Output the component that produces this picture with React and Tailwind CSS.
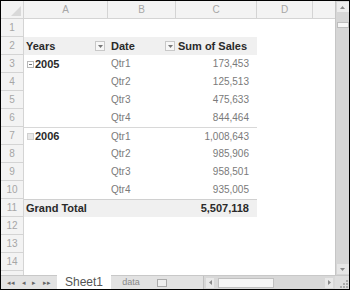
import React from "react";

const rows = [
  { a: "", b: "", c: "" },
  { hdr: true },
  { a: "2005", b: "Qtr1", c: "173,453", group: true },
  { b: "Qtr2", c: "125,513" },
  { b: "Qtr3", c: "475,633" },
  { b: "Qtr4", c: "844,464" },
  { a: "2006", b: "Qtr1", c: "1,008,643", group: true, top: true },
  { b: "Qtr2", c: "985,906" },
  { b: "Qtr3", c: "958,501" },
  { b: "Qtr4", c: "935,005" },
  { total: true },
  {},
  {},
  {},
];

function Drop() {
  return (
    <span className="w-[10px] h-[10px] border border-[#c8c8c8] bg-[#f7f7f7] flex items-center justify-center">
      <svg width="5" height="3" viewBox="0 0 5 3"><path d="M0 0h5L2.5 3z" fill="#777" /></svg>
    </span>
  );
}

function MinusBox({ light }) {
  return (
    <span className={`w-[7px] h-[7px] border ${light ? "border-[#d0d0d0] bg-[#e8e8e8]" : "border-[#b8b8b8] bg-white"} flex items-center justify-center mr-[1px]`}>
      {!light && <span className="w-[3px] h-[1px] bg-[#777]" />}
    </span>
  );
}

export default function App() {
  const cols = "grid-cols-[23px_84px_68px_81px_56px_1fr]";
  return (
    <div className="w-[350px] h-[290px] border border-black bg-white flex flex-col overflow-hidden text-[10px] leading-none" style={{ fontFamily: '"Liberation Sans", Arial, sans-serif' }}>
      <div className="flex flex-1 min-h-0">
        <div className="flex-1 flex flex-col min-w-0">
          {/* column headers */}
          <div className={`grid ${cols} h-[18px] bg-[#f3f3f3] border-b border-[#d4d4d4] text-[#a6a6a6] shrink-0`}>
            <div className="border-r border-[#d4d4d4] relative">
              <svg className="absolute right-[2px] bottom-[2px]" width="10" height="10" viewBox="0 0 10 10"><path d="M10 0V10H0z" fill="#d9d9d9" /></svg>
            </div>
            <div className="border-r border-[#d4d4d4] flex items-center justify-center">A</div>
            <div className="border-r border-[#d4d4d4] flex items-center justify-center">B</div>
            <div className="border-r border-[#d4d4d4] flex items-center justify-center">C</div>
            <div className="border-r border-[#d4d4d4] flex items-center justify-center">D</div>
            <div></div>
          </div>
          {rows.map((r, i) => (
            <div key={i} className={`grid ${cols} h-[18px] shrink-0`}>
              <div className="bg-[#f3f3f3] border-r border-b border-[#d4d4d4] flex items-center justify-center text-[#a6a6a6]">{i + 1}</div>
              {r.hdr ? (
                <>
                  <div className="bg-[#f0f0f0] flex items-center justify-between pl-[2px] pr-[3px] text-[#2a2a2a] font-bold text-[11px]">
                    <span>Years</span><Drop />
                  </div>
                  <div className="bg-[#f0f0f0] flex items-center justify-between pl-[3px] pr-[1px] text-[#2a2a2a] font-bold text-[11px]">
                    <span>Date</span><Drop />
                  </div>
                  <div className="bg-[#f0f0f0] flex items-center pl-[2px] text-[#2a2a2a] font-bold text-[11px] whitespace-nowrap">Sum of Sales</div>
                </>
              ) : r.total ? (
                <>
                  <div className="bg-[#f0f0f0] border-t border-[#d0d0d0] flex items-center pl-[2px] text-[#2a2a2a] font-bold text-[11px] whitespace-nowrap">Grand Total</div>
                  <div className="bg-[#f0f0f0] border-t border-[#d0d0d0]"></div>
                  <div className="bg-[#f0f0f0] border-t border-[#d0d0d0] flex items-center justify-end pr-[8px] text-[#2a2a2a] font-bold text-[11px]">5,507,118</div>
                </>
              ) : (
                <>
                  <div className={`flex items-center pl-[3px] text-[#2a2a2a] font-bold text-[11px] ${r.top ? "border-t border-[#d8d8d8]" : ""}`}>
                    {r.group && <MinusBox light={r.top} />}
                    {r.a}
                  </div>
                  <div className={`flex items-center pl-[3px] text-[#7a7a7a] ${r.top ? "border-t border-[#d8d8d8]" : ""}`}>{r.b}</div>
                  <div className={`flex items-center justify-end pr-[8px] text-[#7a7a7a] ${r.top ? "border-t border-[#d8d8d8]" : ""}`}>{r.c}</div>
                </>
              )}
              <div></div>
              <div></div>
            </div>
          ))}
          <div className={`grid ${cols} flex-1`}>
            <div className="bg-[#f3f3f3] border-r border-[#d4d4d4]"></div>
          </div>
        </div>
        {/* vertical scrollbar */}
        <div className="w-[14px] bg-[#d6d6d6] border-l border-[#c6c6c6] flex flex-col items-center">
          <div className="w-[12px] h-[10px] mt-[1px] bg-[#ececec] flex items-center justify-center">
            <svg width="5" height="3" viewBox="0 0 5 3"><path d="M0 3h5L2.5 0z" fill="#888" /></svg>
          </div>
          <div className="w-[12px] h-[6px] mt-[10px] bg-[#f7f7f7] border border-[#bdbdbd]"></div>
          <div className="flex-1"></div>
          <div className="w-[12px] h-[10px] mb-[1px] bg-[#e6e6e6] flex items-center justify-center">
            <svg width="5" height="3" viewBox="0 0 5 3"><path d="M0 0h5L2.5 3z" fill="#888" /></svg>
          </div>
        </div>
      </div>
      {/* tab bar */}
      <div className="h-[14px] shrink-0 flex items-stretch bg-[#e2e2e2] border-t border-[#c8c8c8] text-[#777]">
        <div className="w-[56px] flex items-center justify-around px-[3px] text-[7px] text-[#666]">
          <span>◂◂</span><span>◂</span><span>▸</span><span>▸▸</span>
        </div>
        <div className="w-[54px] bg-white flex items-center justify-center text-[12px] text-[#555] -mt-[1px]">Sheet1</div>
        <div className="w-[40px] flex items-center justify-center text-[9px] text-[#888]">data</div>
        <div className="w-[22px] flex items-center justify-center">
          <span className="w-[10px] h-[8px] border border-[#aaa] bg-[#eee]"></span>
        </div>
        <div className="w-[30px]"></div>
        <div className="flex-1 flex items-center bg-[#d8d8d8] border-l border-[#c0c0c0] px-[2px] gap-[2px]">
          <div className="w-[8px] h-[10px] bg-[#e8e8e8] flex items-center justify-center">
            <svg width="3" height="5" viewBox="0 0 3 5"><path d="M3 0v5L0 2.5z" fill="#888" /></svg>
          </div>
          <div className="w-[56px] h-[10px] ml-[2px] bg-[#f5f5f5] border border-[#c0c0c0]"></div>
          <div className="flex-1"></div>
          <div className="w-[8px] h-[10px] bg-[#e8e8e8] flex items-center justify-center">
            <svg width="3" height="5" viewBox="0 0 3 5"><path d="M0 0v5L3 2.5z" fill="#888" /></svg>
          </div>
        </div>
        <div className="w-[14px] bg-[#dedede] flex items-end justify-end p-[1px]">
          <svg width="8" height="8" viewBox="0 0 8 8" fill="#aaa"><rect x="6" y="0" width="2" height="2"/><rect x="3" y="3" width="2" height="2"/><rect x="6" y="3" width="2" height="2"/><rect x="0" y="6" width="2" height="2"/><rect x="3" y="6" width="2" height="2"/><rect x="6" y="6" width="2" height="2"/></svg>
        </div>
      </div>
    </div>
  );
}
